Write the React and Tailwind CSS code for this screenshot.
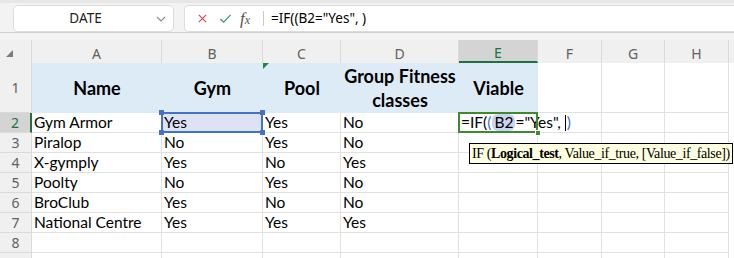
import React from 'react';

const cols = [
  { id: 'A', w: 130 },
  { id: 'B', w: 101 },
  { id: 'C', w: 78 },
  { id: 'D', w: 118 },
  { id: 'E', w: 79 },
  { id: 'F', w: 64 },
  { id: 'G', w: 63 },
  { id: 'H', w: 64 },
];

const rows = [
  ['Piralop', 'No', 'Yes', 'No'],
  ['X-gymply', 'Yes', 'No', 'Yes'],
  ['Poolty', 'No', 'Yes', 'No'],
  ['BroClub', 'Yes', 'No', 'No'],
  ['National Centre', 'Yes', 'Yes', 'Yes'],
  ['', '', '', ''],
];

const cellFont = { fontFamily: 'Lato, "Noto Sans", sans-serif' };

const RowHead = ({ n, active }) => (
  <div
    className={`w-[32px] shrink-0 flex items-center justify-center text-[14px] border-b border-[#dadada] ${active ? 'bg-[#d4d4d4] text-[#1e7145] border-r-2 border-r-[#1e7145]' : 'bg-[#f0f0f0] text-[#616161] border-r border-r-[#dadada]'}`}
    style={{ fontFamily: '"Noto Sans", sans-serif' }}
  >
    {n}
  </div>
);

const Cell = ({ w, children, className = '' }) => (
  <div
    className={`shrink-0 h-full border-r border-b border-[#e1e1e1] px-[2px] flex items-center text-[15.5px] text-black whitespace-nowrap ${className}`}
    style={{ width: w, ...cellFont }}
  >
    {children}
  </div>
);

const Handle = ({ className }) => (
  <div className={`absolute w-[5px] h-[5px] bg-[#4472c4] ${className}`} />
);

export default function App() {
  return (
    <div className="w-[734px] h-[258px] overflow-hidden bg-white relative">
      {/* name box + formula bar */}
      <div className="h-[40px] bg-[#f3f3f3] border-t-[3px] border-[#e6e6e6] pt-[2px] relative">
        <div className="flex gap-[10px] pl-[13px] h-[27px]">
          <div className="w-[161px] h-full bg-white rounded-[5px] border border-[#dcdcdc] flex items-center relative">
            <span className="flex-1 text-center pr-[16px] text-[13.5px] text-[#222]" style={{ fontFamily: '"Noto Sans", sans-serif' }}>DATE</span>
            <svg width="10" height="6" viewBox="0 0 10 6" className="absolute right-[7px] top-[10px]">
              <path d="M1 1 L5 5 L9 1" fill="none" stroke="#8a8a8a" strokeWidth="1.1" />
            </svg>
          </div>
          <div className="flex-1 h-full bg-white rounded-l-[5px] border border-r-0 border-[#dcdcdc] flex items-center">
            <svg width="11" height="11" viewBox="0 0 12 12" className="ml-[12px]">
              <path d="M2 2 L10 10 M10 2 L2 10" stroke="#e0475a" strokeWidth="1.3" />
            </svg>
            <svg width="13" height="11" viewBox="0 0 14 12" className="ml-[11px]">
              <path d="M1.5 6.5 L5 10 L12.5 2" fill="none" stroke="#3a9a6a" strokeWidth="1.4" />
            </svg>
            <span className="ml-[8px] text-[17px] italic text-[#555] leading-none" style={{ fontFamily: '"Liberation Serif", serif' }}>
              f<span className="text-[12px]">x</span>
            </span>
            <div className="ml-[13px] w-px h-[15px] bg-[#c8c8c8]" />
            <span className="ml-[7px] text-[13.5px] text-black" style={{ fontFamily: '"Noto Sans", sans-serif' }}>=IF((B2="Yes", )</span>
          </div>
        </div>
        <div className="absolute left-0 right-0 bottom-[7px] h-px bg-[#cfcfcf]" />
      </div>

      {/* column headers */}
      <div className="flex h-[23px] bg-[#f0f0f0]" style={{ fontFamily: '"Noto Sans", sans-serif' }}>
        <div className="w-[32px] shrink-0 flex items-center justify-center border-r border-[#dadada]">
          <svg width="7" height="7" viewBox="0 0 7 7" className="ml-[-12px] mt-[4px]">
            <path d="M7 0 L7 7 L0 7 Z" fill="#7a7a7a" />
          </svg>
        </div>
        {cols.map((c) => (
          <div
            key={c.id}
            className={`shrink-0 flex items-center justify-center pt-[3px] text-[14px] border-r border-[#dadada] ${c.id === 'E' ? 'bg-[#d4d4d4] text-[#1e7145] border-b-2 border-b-[#1e7145]' : 'text-[#616161]'}`}
            style={{ width: c.w }}
          >
            {c.id}
          </div>
        ))}
        <div className="flex-1" />
      </div>

      {/* row 1 headers */}
      <div className="flex h-[50px]">
        <RowHead n="1" />
        {[
          ['Name', 130],
          ['Gym', 101],
          ['Pool', 78],
          ['Group Fitness classes', 118],
          ['Viable', 79],
        ].map(([t, w]) => (
          <div
            key={t}
            className="shrink-0 h-full bg-[#ddebf7] flex items-center justify-center text-center font-bold text-[18px] leading-[24px] text-black relative"
            style={{ width: w, ...cellFont }}
          >
            {t === 'Pool' && (
              <div className="absolute left-0 top-0 w-0 h-0 border-t-[6px] border-r-[6px] border-t-[#1e8a3c] border-r-transparent" />
            )}
            {t}
          </div>
        ))}
        <Cell w={64} />
        <Cell w={63} />
        <Cell w={64} />
      </div>

      {/* row 2 */}
      <div className="flex h-[20px] relative">
        <RowHead n="2" active />
        <Cell w={130}>Gym Armor</Cell>
        <Cell w={101} className="bg-[#dde3f4] relative">
          Yes
          <div className="absolute inset-[-1px] border-2 border-[#4472c4]" />
          <Handle className="left-[-3px] top-[-3px]" />
          <Handle className="right-[-3px] top-[-3px]" />
          <Handle className="left-[-3px] bottom-[-3px]" />
          <Handle className="right-[-3px] bottom-[-3px]" />
        </Cell>
        <Cell w={78}>Yes</Cell>
        <Cell w={118}>No</Cell>
        <Cell w={79} className="relative overflow-visible z-10">
          <span className="flex items-center">
            =IF(<span className="text-[#3b6fd1]">(</span>
            <span className="ml-[1px] px-[2px] rounded-[6px] bg-[#c9d5ef] leading-[17px]">B2</span>
            ="Yes",
            <span className="ml-[4px] w-px h-[16px] bg-black" />
            <span className="ml-[1px] text-[#3b6fd1]">)</span>
          </span>
          <div className="absolute left-[-1px] top-[-1px] w-[80px] h-[21px] border-2 border-[#3f8a2f]" />
          <div className="absolute right-[-4px] bottom-[-4px] w-[6px] h-[6px] bg-[#3f8a2f] border border-white" />
        </Cell>
        <Cell w={64} />
        <Cell w={63} />
        <Cell w={64} />
      </div>

      {/* rows 3..8 */}
      {rows.map((r, i) => (
        <div key={i} className="flex h-[20px]">
          <RowHead n={i + 3} />
          <Cell w={130}>{r[0]}</Cell>
          <Cell w={101}>{r[1]}</Cell>
          <Cell w={78}>{r[2]}</Cell>
          <Cell w={118}>{r[3]}</Cell>
          <Cell w={79} />
          <Cell w={64} />
          <Cell w={63} />
          <Cell w={64} />
        </div>
      ))}
      <div className="flex h-[20px]">
        <RowHead n="" />
        {cols.map((c) => (
          <Cell key={c.id} w={c.w} />
        ))}
      </div>

      {/* tooltip */}
      <div
        className="absolute left-[469px] top-[143px] h-[21px] px-[2px] bg-[#ffffe1] border border-black flex items-center text-[14px] tracking-[-0.4px] text-black whitespace-nowrap z-20"
        style={{ fontFamily: '"Liberation Serif", serif' }}
      >
        IF (<b>Logical_test</b>, Value_if_true, [Value_if_false])
      </div>
    </div>
  );
}
